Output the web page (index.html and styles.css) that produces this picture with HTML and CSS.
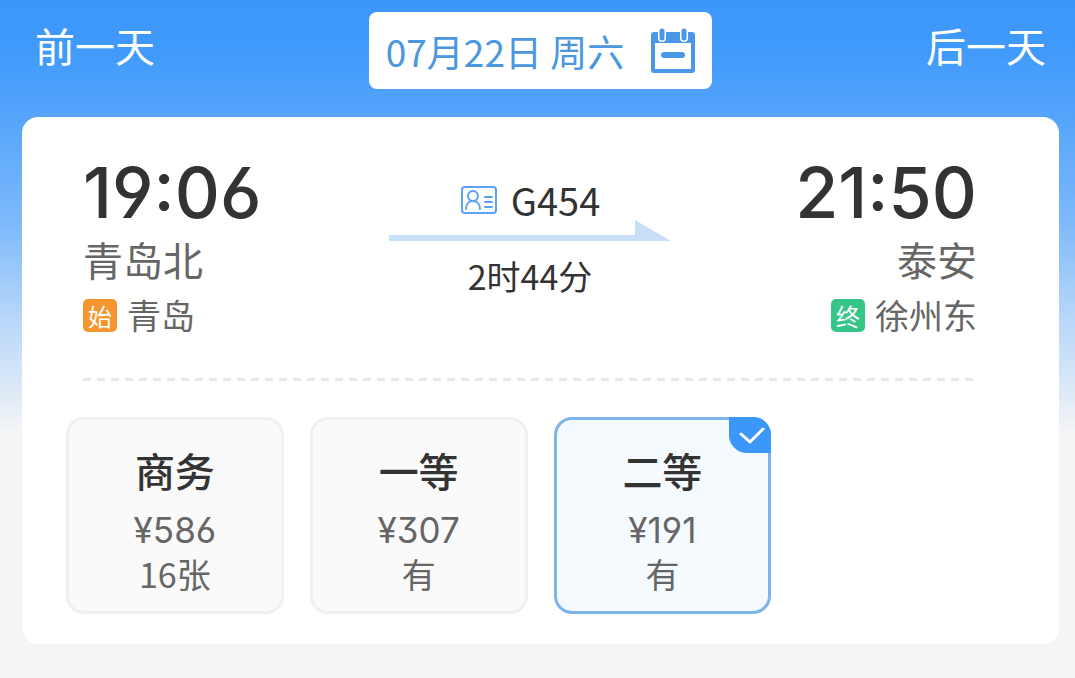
FILE: index.html
```html
<!DOCTYPE html>
<html lang="zh-CN">
<head>
    <meta charset="UTF-8">
    <meta name="viewport" content="width=device-width, initial-scale=1.0">
    <title>G454 青岛北 - 泰安</title>
    <link rel="stylesheet" href="styles.css">
</head>
<body>
    <header class="day-bar">
        <button type="button" class="day-btn">前一天</button>
        <button type="button" class="date-btn">
            <span>07月22日 周六</span>
            <svg class="calendar-icon" viewBox="0 0 46 46" aria-hidden="true">
                <path fill="#4a97e8" fill-rule="evenodd" d="M4 4h38a3 3 0 0 1 3 3v35a3 3 0 0 1-3 3H4a3 3 0 0 1-3-3V7a3 3 0 0 1 3-3zM5 15v26h36V15z"/>
                <path d="M12 3v7M34 3v7" stroke="#fff" stroke-width="8" stroke-linecap="round"/>
                <path d="M12 3v7M34 3v7" stroke="#4a97e8" stroke-width="5" stroke-linecap="round"/>
                <path d="M14 27h18" stroke="#4a97e8" stroke-width="6" stroke-linecap="round"/>
            </svg>
        </button>
        <button type="button" class="day-btn">后一天</button>
    </header>

    <main class="card">
        <section class="journey">
            <div class="stop">
                <div class="time">19:06</div>
                <div class="station">青岛北</div>
                <div class="terminal"><span class="tag tag-start">始</span>青岛</div>
            </div>
            <div class="train">
                <div class="train-no">
                    <svg class="id-icon" viewBox="0 0 38 30" fill="none" stroke="#5ba3f0" stroke-width="2" stroke-linecap="round" aria-hidden="true">
                        <rect x="2" y="2" width="34" height="26" rx="3"/>
                        <circle cx="13" cy="11" r="5"/>
                        <path d="M6 24c0-5 3-8 7-8s7 3 7 8M25 12h7M25 17h7M25 22h7"/>
                    </svg>
                    <span>G454</span>
                </div>
                <svg class="arrow" viewBox="0 0 282 22" aria-hidden="true">
                    <path fill="#c8dff7" d="M0 15h246V0l36 21H0z"/>
                </svg>
                <div class="duration">2时44分</div>
            </div>
            <div class="stop stop-end">
                <div class="time">21:50</div>
                <div class="station">泰安</div>
                <div class="terminal"><span class="tag tag-end">终</span>徐州东</div>
            </div>
        </section>

        <svg class="divider" aria-hidden="true"><line x1="0" y1="50%" x2="100%" y2="50%"/></svg>

        <form class="seats">
            <label class="seat">
                <input type="radio" name="seat" value="business">
                <span class="seat-name">商务</span>
                <span class="price">¥586</span>
                <span class="left">16张</span>
            </label>
            <label class="seat">
                <input type="radio" name="seat" value="first">
                <span class="seat-name">一等</span>
                <span class="price">¥307</span>
                <span class="left">有</span>
            </label>
            <label class="seat">
                <input type="radio" name="seat" value="second" checked>
                <span class="seat-name">二等</span>
                <span class="price">¥191</span>
                <span class="left">有</span>
                <span class="check">
                    <svg viewBox="0 0 42 36" fill="none" aria-hidden="true">
                        <path d="M12 17l9 8 13-13" stroke="#fff" stroke-width="3" stroke-linecap="round" stroke-linejoin="round"/>
                    </svg>
                </span>
            </label>
        </form>
    </main>
</body>
</html>
```
FILE: styles.css
```css
* {
    box-sizing: border-box;
}
body {
    margin: 0;
    padding-bottom: 34px;
    font-family: "Noto Sans CJK SC", sans-serif;
    color: #333;
    background: #f5f5f5 linear-gradient(#3c97fb 0, #409afb 50px, #56a5fb 120px, #7cb9fb 220px, #b0d3f9 305px, #d2e4f8 370px, #f5f5f5 435px) no-repeat;
}
button {
    padding: 0;
    border: none;
    background: none;
    font-family: inherit;
    cursor: pointer;
}

.day-bar {
    display: flex;
    justify-content: space-between;
    align-items: center;
    padding: 12px 29px 28px 35px;
}
.day-btn {
    color: #fff;
    font-size: 40px;
    line-height: 40px;
    padding-bottom: 12px;
}
.date-btn {
    display: flex;
    align-items: center;
    gap: 26px;
    height: 77px;
    padding: 0 16px 0 17px;
    border-radius: 8px;
    background: #fff;
    color: #4a97e0;
    font-size: 37px;
    line-height: 40px;
}
.calendar-icon {
    width: 46px;
    height: 46px;
    overflow: visible;
}

.card {
    margin: 0 16px 0 22px;
    padding: 44px 44px 30px;
    border-radius: 16px;
    background: #fff;
}
.journey {
    display: grid;
    grid-template-columns: 1fr 282px 1fr;
    margin: 0 38px 0 17px;
}
/* ss01 = open 6 and 9 */
.time {
    font-family: Inter, sans-serif;
    font-size: 70px;
    font-weight: 500;
    font-feature-settings: "ss01";
    line-height: 64px;
}
.station {
    margin-top: 14px;
    color: #666;
    font-size: 40px;
    line-height: 40px;
}
.terminal {
    display: flex;
    align-items: center;
    gap: 10px;
    margin-top: 18px;
    color: #666;
    font-size: 34px;
    line-height: 36px;
}
.stop-end {
    text-align: right;
}
.stop-end .terminal {
    justify-content: flex-end;
}
.tag {
    padding: 0 5px;
    border-radius: 5px;
    color: #fff;
    font-size: 24px;
    line-height: 33px;
}
.tag-start {
    background: #f5952f;
}
.tag-end {
    background: #35c687;
}

.train {
    padding-top: 19px;
    text-align: center;
}
.train-no {
    display: flex;
    justify-content: center;
    align-items: center;
    gap: 13px;
    font-size: 38px;
    line-height: 40px;
}
.id-icon {
    width: 38px;
    height: 30px;
}
.arrow {
    display: block;
    width: 100%;
}
.duration {
    margin-top: 14px;
    font-size: 34px;
    line-height: 40px;
}

.divider {
    display: block;
    width: calc(100% - 55px);
    height: 3px;
    margin: 45px 38px 36px 17px;
    stroke: #e8e8e8;
    stroke-width: 3;
    stroke-dasharray: 8 6;
}

.seats {
    display: grid;
    grid-template-columns: repeat(4, 1fr);
    gap: 26px;
}
.seat {
    position: relative;
    display: flex;
    flex-direction: column;
    align-items: center;
    padding: 30px 0 15px;
    border: 3px solid #f0f0f0;
    border-radius: 18px;
    background: #fafafa;
    color: #666;
    cursor: pointer;
}
.seat input {
    position: absolute;
    opacity: 0;
}
.seat:has(input:checked) {
    border-color: #7db4ea;
    background: #f5faff;
}
.seat-name {
    color: #333;
    font-size: 40px;
    font-weight: 500;
    line-height: 40px;
}
.price {
    margin-top: 18px;
    font-family: Inter, sans-serif;
    font-size: 35px;
    font-feature-settings: "ss01";
    line-height: 44px;
}
.left {
    font-size: 34px;
    line-height: 44px;
}
.check {
    position: absolute;
    top: -3px;
    right: -3px;
    width: 42px;
    height: 36px;
    border-radius: 0 18px 0 18px;
    background: #3c97fb;
}
```
